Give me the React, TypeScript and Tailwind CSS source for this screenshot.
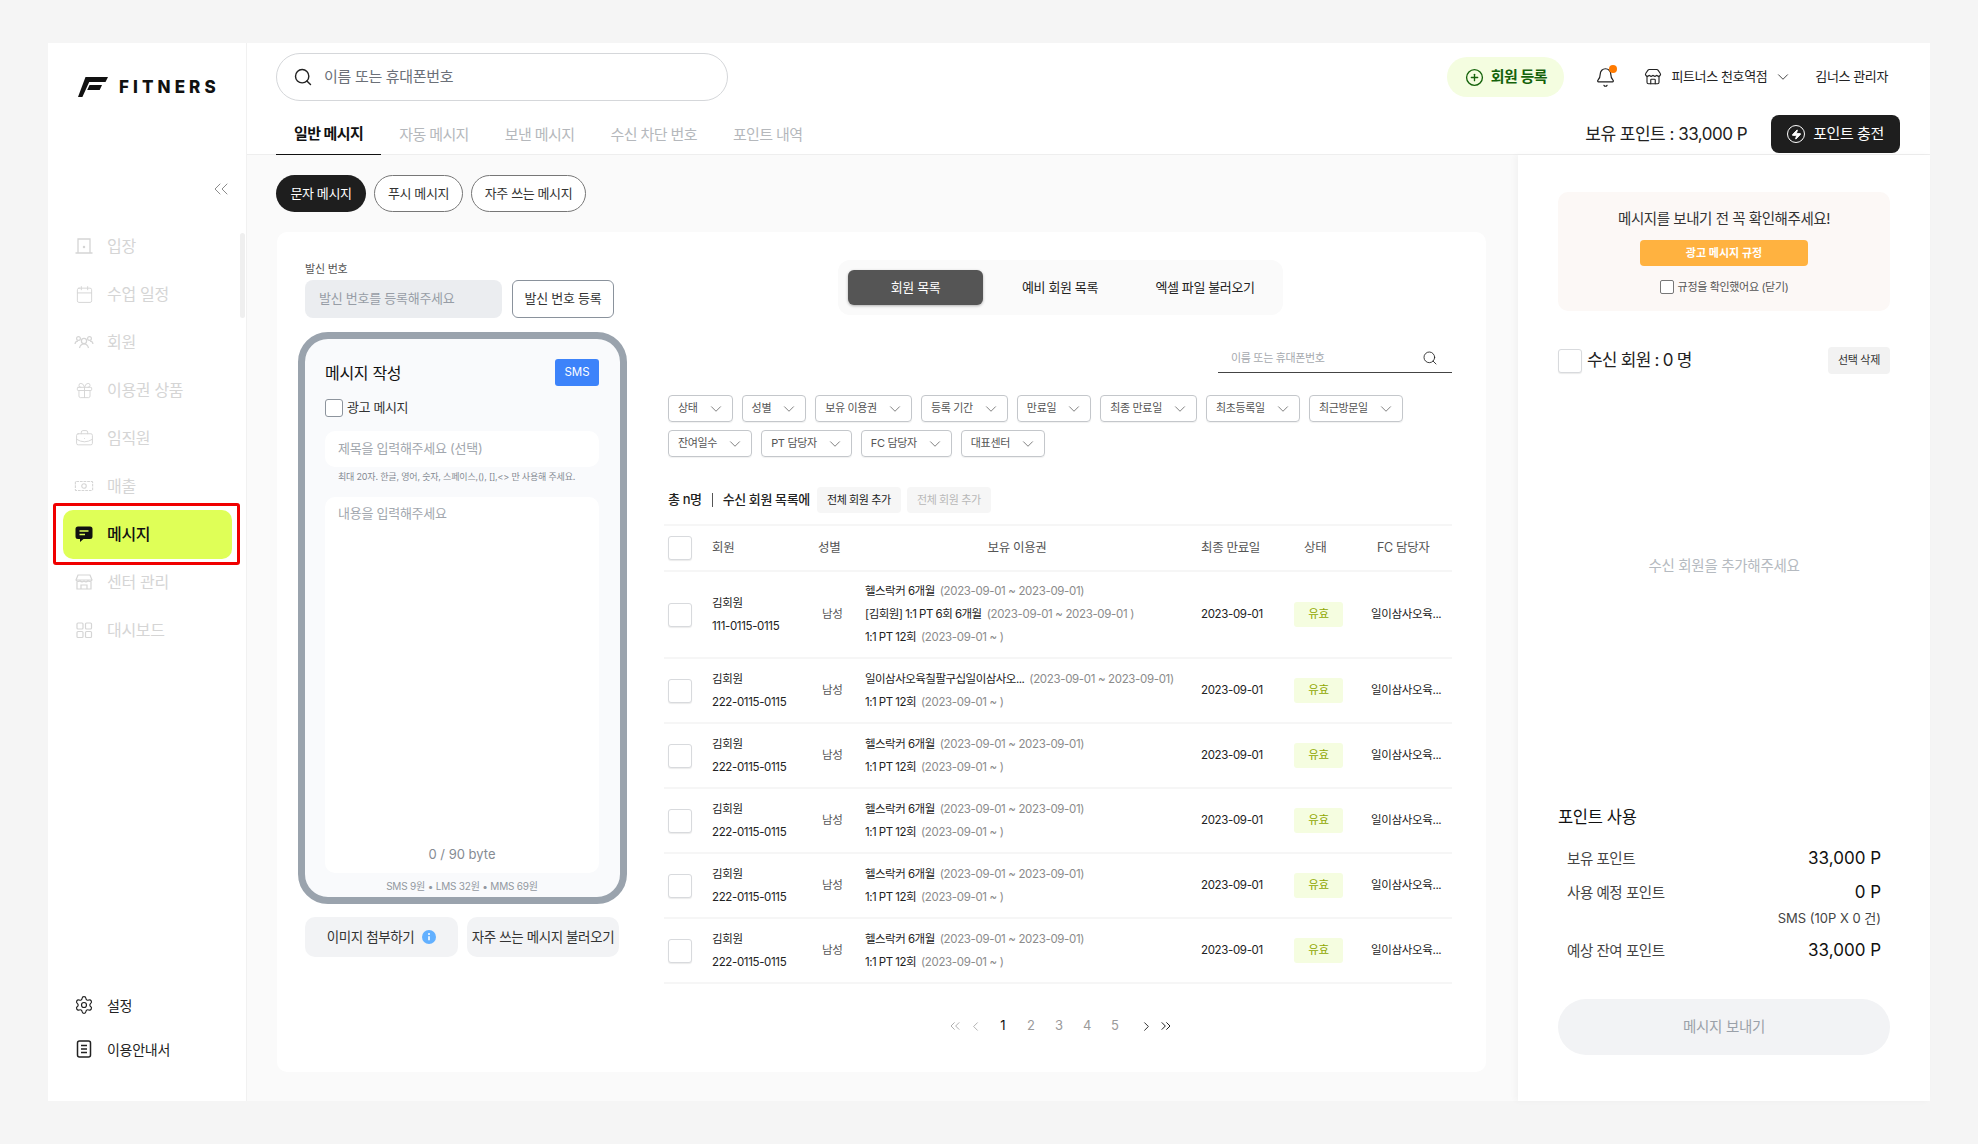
import { Bell, BriefcaseBusiness, Calendar, ChevronDown, ChevronLeft, ChevronRight, ChevronsLeft, ChevronsRight, CirclePlus, Gift, Search, Settings, Store, Zap } from 'lucide-react';

const DoorIcon = () => (
  <svg width="20" height="20" viewBox="0 0 20 20" fill="none" stroke="currentColor" strokeWidth="1.3">
    <path d="M4 17V3h12v14M1.5 17h17" />
    <circle cx="10" cy="11" r="0.6" fill="currentColor" />
  </svg>
);

const PeopleIcon = () => (
  <svg width="20" height="20" viewBox="0 0 20 20" fill="none" stroke="currentColor" strokeWidth="1.2">
    <circle cx="10" cy="9" r="2.6" />
    <path d="M5.5 16c.6-2.6 2.3-4 4.500-4s3.900 1.400 4.500 4" />
    <circle cx="4.500" cy="6.500" r="1.900" />
    <circle cx="15.500" cy="6.500" r="1.900" />
    <path d="M1 12c.3-1.700 1.400-2.800 3-2.800M19 12c-.3-1.700-1.400-2.800-3-2.800" />
  </svg>
);

const MoneyIcon = () => (
  <svg width="22" height="20" viewBox="0 0 22 20" fill="none" stroke="currentColor" strokeWidth="1.2">
    <rect x="1.500" y="5" width="19" height="10" rx="1" strokeDasharray="3 1" />
    <circle cx="11" cy="10" r="2.500" />
  </svg>
);

const MessageIcon = () => (
  <svg width="20" height="20" viewBox="0 0 20 20">
    <path d="M4 2.500h12a2.500 2.500 0 0 1 2.500 2.500v7.500a2.500 2.500 0 0 1-2.500 2.500h-6.500l-3.500 3v-3H4a2.500 2.500 0 0 1-2.500-2.500V5A2.500 2.500 0 0 1 4 2.500z" fill="#111" />
    <path d="M5.500 7h9M5.500 10.500h5.500" stroke="#dfff57" strokeWidth="1.500" />
  </svg>
);

const CenterIcon = () => (
  <svg width="20" height="20" viewBox="0 0 20 20" fill="none" stroke="currentColor" strokeWidth="1.2">
    <path d="M4 3h12l2 5a2.600 2.600 0 0 1-4 .8 3 3 0 0 1-4 .2 3 3 0 0 1-4-.2A2.600 2.600 0 0 1 2 8z" />
    <path d="M3 9.500V17h14V9.500M7 17v-4h6v4M2 8h16" />
  </svg>
);

const GridIcon = () => (
  <svg width="20" height="20" viewBox="0 0 20 20" fill="none" stroke="currentColor" strokeWidth="1.2">
    <rect x="3" y="3" width="6" height="6" rx="1" />
    <rect x="11.500" y="3" width="6" height="6" rx="1" />
    <rect x="3" y="11.500" width="6" height="6" rx="1" />
    <rect x="11.500" y="11.500" width="6" height="6" rx="1" />
  </svg>
);

const GuideIcon = () => (
  <svg width="20" height="20" viewBox="0 0 20 20" fill="none" stroke="#222" strokeWidth="1.500">
    <rect x="3.500" y="2" width="13" height="16" rx="2" />
    <path d="M7 6.500h6M7 10h6M7 13.500h6" />
  </svg>
);

const InfoDot = () => (
  <svg width="14" height="14" viewBox="0 0 14 14">
    <circle cx="7" cy="7" r="7" fill="#62b0ff" />
    <path d="M7 6.200v4" stroke="white" strokeWidth="1.600" />
    <circle cx="7" cy="4" r="1" fill="white" />
  </svg>
);

const Logo = () => (
  <svg width="30" height="20" viewBox="0 0 30 20">
    <path d="M7.500 0H30l-2.500 5H11.200L4.400 20H0z" fill="#111" />
    <path d="M11.500 8H24l-2.300 5H9.200z" fill="#111" />
  </svg>
);

const navItems = [
  { label: '입장', icon: <DoorIcon /> },
  { label: '수업 일정', icon: <Calendar size={19} strokeWidth={1.2} /> },
  { label: '회원', icon: <PeopleIcon /> },
  { label: '이용권 상품', icon: <Gift size={19} strokeWidth={1.2} /> },
  { label: '임직원', icon: <BriefcaseBusiness size={19} strokeWidth={1.2} /> },
  { label: '매출', icon: <MoneyIcon /> },
];

const filters = ['상태', '성별', '보유 이용권', '등록 기간', '만료일', '최종 만료일', '최초등록일', '최근방문일', '잔여일수', 'PT 담당자', 'FC 담당자', '대표센터'];

const tabs = ['자동 메시지', '보낸 메시지', '수신 차단 번호', '포인트 내역'];

const rows = [
  {
    phone: '111-0115-0115',
    tickets: [
      ['헬스락커 6개월', '(2023-09-01 ~ 2023-09-01)'],
      ['[김회원] 1:1 PT 6회 6개월', '(2023-09-01 ~ 2023-09-01 )'],
      ['1:1 PT 12회', '(2023-09-01 ~ )'],
    ],
  },
  {
    phone: '222-0115-0115',
    tickets: [
      ['일이삼사오육칠팔구십일이삼사오...', '(2023-09-01 ~ 2023-09-01)'],
      ['1:1 PT 12회', '(2023-09-01 ~ )'],
    ],
  },
  ...[0, 1, 2, 3].map(() => ({
    phone: '222-0115-0115',
    tickets: [
      ['헬스락커 6개월', '(2023-09-01 ~ 2023-09-01)'],
      ['1:1 PT 12회', '(2023-09-01 ~ )'],
    ],
  })),
];

const Box = () => <div className="w-6 h-6 shrink-0 rounded-[3px] border border-[#d8dadd] bg-white shadow-[0_1px_1px_rgba(0,0,0,0.08)]" />;

const Sidebar = () => (
  <aside className="relative w-[199px] shrink-0 flex flex-col bg-white border-r border-[#f1f1f1] pb-[42px]">
    <div className="flex items-center gap-[11px] pl-[30px] pt-[20px] h-[68px]">
      <Logo />
      <span className="text-[17px] font-extrabold tracking-[0.24em] text-[#111] leading-none">FITNERS</span>
    </div>
    <div className="flex justify-end pr-[13px] mt-[66px] text-[#8c8c8c]">
      <ChevronsLeft size={24} strokeWidth={1} />
    </div>
    <div className="absolute left-[192px] top-[190px] w-[5px] h-[85px] rounded-full bg-[#efefef]" />
    <nav className="flex flex-col mt-[21px]">
      {navItems.map(item => (
        <div key={item.label} className="flex items-center h-12 pl-[26px] text-[#d5d5d5]">
          <span className="w-[20px] flex justify-center">{item.icon}</span>
          <span className="ml-[13px] text-[16px] tracking-[-0.02em]">{item.label}</span>
        </div>
      ))}
      <div className="relative h-12 flex items-center">
        <div className="ml-[15px] w-[169px] h-[49px] rounded-[10px] bg-[#dfff57] flex items-center pl-[11px] text-[#111]">
          <MessageIcon />
          <span className="ml-[13px] text-[16px] font-medium tracking-[-0.02em]">메시지</span>
        </div>
        <div className="absolute left-[5px] top-[-7px] w-[187px] h-[62px] border-[3px] border-[#f00000] rounded-[3px]" />
      </div>
      <div className="flex items-center h-12 pl-[26px] text-[#d5d5d5]">
        <span className="w-[20px] flex justify-center"><CenterIcon /></span>
        <span className="ml-[13px] text-[16px] tracking-[-0.02em]">센터 관리</span>
      </div>
      <div className="flex items-center h-12 pl-[26px] text-[#d5d5d5]">
        <span className="w-[20px] flex justify-center"><GridIcon /></span>
        <span className="ml-[13px] text-[16px] tracking-[-0.02em]">대시보드</span>
      </div>
    </nav>
    <div className="mt-auto flex flex-col gap-[24px] pl-[26px] text-[14px] text-[#222] tracking-[-0.02em]">
      <div className="flex items-center h-5 gap-[13px]"><Settings size={20} strokeWidth={1.4} />설정</div>
      <div className="flex items-center h-5 gap-[13px]"><GuideIcon />이용안내서</div>
    </div>
  </aside>
);

const Header = () => (
  <header className="shrink-0 h-[112px] bg-white border-b border-[#eeeeee]">
    <div className="flex items-center h-[58px] pt-[10px] pl-[29px] pr-[42px]">
      <div className="w-[452px] h-[48px] rounded-full border border-[#d5d7da] flex items-center pl-[16px]">
        <Search size={20} strokeWidth={1.7} className="text-[#222]" />
        <span className="ml-[11px] text-[15px] text-[#6b7078] tracking-[-0.02em]">이름 또는 휴대폰번호</span>
      </div>
      <div className="ml-auto flex items-center">
        <div className="w-[117px] h-[40px] rounded-full bg-[#f4fde0] flex items-center justify-center gap-[7px] text-[#14620a] text-[15px] font-bold tracking-[-0.03em]">
          <CirclePlus size={19} strokeWidth={1.7} />회원 등록
        </div>
        <div className="relative ml-[31px] text-[#222]">
          <Bell size={21} strokeWidth={1.4} />
          <div className="absolute right-[-1px] top-[-2px] w-[8px] h-[8px] rounded-full bg-[#ff7a00]" />
        </div>
        <Store size={18} strokeWidth={1.5} className="ml-[28px] text-[#222]" />
        <span className="ml-[9px] text-[13px] text-[#222] tracking-[-0.03em]">피트너스 천호역점</span>
        <ChevronDown size={18} strokeWidth={1.2} className="ml-[7px] text-[#333]" />
        <span className="ml-[23px] text-[13px] text-[#222] tracking-[-0.03em]">김너스 관리자</span>
      </div>
    </div>
    <div className="flex items-center h-[42px] mt-[12px] pl-[29px] pr-[30px]">
      <div className="flex h-full">
        <div className="px-[18px] pt-[1px] flex items-center border-b-2 border-[#111] text-[15px] font-semibold text-[#111] tracking-[-0.04em] h-[43px]">일반 메시지</div>
        {tabs.map(t => (
          <div key={t} className="px-[18px] pt-[2px] flex items-center text-[15px] text-[#b5b8bc] tracking-[-0.04em]">{t}</div>
        ))}
      </div>
      <div className="ml-auto flex items-center">
        <span className="pt-[2px] text-[17px] text-[#222] tracking-[-0.03em]">보유 포인트 : 33,000 P</span>
        <div className="ml-[24px] w-[129px] h-[38px] rounded-[8px] bg-[#1e1e1e] flex items-center justify-center gap-[8px] text-white text-[15px] tracking-[-0.03em]">
          <span className="w-[18px] h-[18px] rounded-full border-[1.5px] border-white flex items-center justify-center">
            <Zap size={11} fill="white" />
          </span>
          포인트 충전
        </div>
      </div>
    </div>
  </header>
);

const Composer = () => (
  <div className="w-[329px] shrink-0">
    <div className="ml-[7px]">
      <div className="h-[14px] leading-[14px] text-[11px] text-[#555] tracking-[-0.02em]">발신 번호</div>
      <div className="flex mt-[4px] gap-[10px]">
        <div className="w-[197px] h-[38px] rounded-[8px] bg-[#ebedf0] flex items-center pl-[14px] text-[13px] text-[#979da6] tracking-[-0.02em]">발신 번호를 등록해주세요</div>
        <div className="w-[102px] h-[38px] rounded-[6px] border border-[#8a929c] flex items-center justify-center text-[13px] text-[#333] tracking-[-0.02em]">발신 번호 등록</div>
      </div>
    </div>
    <div className="mt-[14px] h-[572px] rounded-[30px] border-[7px] border-[#9aa3ad] bg-[#f9fafc] pt-[20px] pl-[20px] pr-[21px] flex flex-col">
      <div className="flex items-center justify-between h-[27px]">
        <span className="text-[16px] text-[#111] tracking-[-0.02em]">메시지 작성</span>
        <span className="w-[44px] h-[27px] rounded-[3px] bg-[#3d83fa] text-white text-[11.5px] flex items-center justify-center">SMS</span>
      </div>
      <div className="flex items-center h-[18px] mt-[13px] gap-[4px]">
        <div className="w-[18px] h-[18px] rounded-[3px] border border-[#8d949d] bg-white" />
        <span className="text-[13px] text-[#333] tracking-[-0.03em]">광고 메시지</span>
      </div>
      <div className="mt-[14px] h-[36px] rounded-[10px] bg-white flex items-center pl-[13px] text-[13px] text-[#a2a7ae] tracking-[-0.02em]">제목을 입력해주세요 (선택)</div>
      <div className="mt-[3px] h-[14px] pl-[13px] leading-[14px] text-[9px] text-[#858b93] tracking-[-0.02em] whitespace-nowrap">최대 20자. 한글, 영어, 숫자, 스페이스,(), [],&lt;&gt; 만 사용해 주세요.</div>
      <div className="mt-[13px] h-[376px] rounded-[10px] bg-white flex flex-col justify-between pl-[13px] pt-[8px] pb-[11px]">
        <span className="text-[13px] leading-[16px] text-[#a2a7ae] tracking-[-0.02em]">내용을 입력해주세요</span>
        <span className="text-[13px] leading-[16px] text-[#858b93] text-center pr-[13px]">0 / 90 byte</span>
      </div>
      <div className="mt-[6px] text-center text-[10px] leading-[14px] text-[#9298a0] tracking-[-0.02em]">SMS 9원 • LMS 32원 • MMS 69원</div>
    </div>
    <div className="flex gap-[9px] ml-[7px] mt-[13px]">
      <div className="w-[153px] h-[40px] rounded-[10px] bg-[#f2f3f5] flex items-center justify-center gap-[8px] text-[13.5px] text-[#333] tracking-[-0.03em]">
        이미지 첨부하기
        <InfoDot />
      </div>
      <div className="w-[152px] h-[40px] rounded-[10px] bg-[#f2f3f5] flex items-center justify-center text-[13.5px] text-[#333] tracking-[-0.03em] whitespace-nowrap">자주 쓰는 메시지 불러오기</div>
    </div>
  </div>
);

const MemberTable = () => (
  <div className="mt-[11px] text-[11.5px] tracking-[-0.03em] text-[#222]">
    <div className="flex items-center h-[48px] border-y-2 border-[#f6f6f6] pl-[4px] text-[12.5px] text-[#555]">
      <Box />
      <div className="w-[126px] pl-[20px]">회원</div>
      <div className="w-[47px]">성별</div>
      <div className="w-[336px] pr-[32px] text-center">보유 이용권</div>
      <div className="w-[93px]">최종 만료일</div>
      <div className="w-[77px] pl-[10px]">상태</div>
      <div className="w-[81px] pl-[6px]">FC 담당자</div>
    </div>
    {rows.map((row, i) => (
      <div key={i} className="flex items-center border-b-2 border-[#f6f6f6] pl-[4px]" style={{ height: i === 0 ? 87 : 65 }}>
        <Box />
        <div className="w-[126px] pl-[20px] leading-[23px]">
          <div>김회원</div>
          <div>{row.phone}</div>
        </div>
        <div className="w-[47px] pl-[4px] text-[#555]">남성</div>
        <div className="w-[336px] leading-[23px] whitespace-nowrap">
          {row.tickets.map((t, j) => (
            <div key={j}>
              <span className="tracking-[-0.045em]">{t[0]}</span>
              <span className="ml-[5px] text-[#8b8b8b]">{t[1]}</span>
            </div>
          ))}
        </div>
        <div className="w-[93px]">2023-09-01</div>
        <div className="w-[77px]">
          <div className="w-[49px] h-[25px] rounded-[3px] bg-[#f5fde0] text-[#90a800] flex items-center justify-center">유효</div>
        </div>
        <div className="w-[81px] whitespace-nowrap">일이삼사오육...</div>
      </div>
    ))}
  </div>
);

const Pagination = () => (
  <div className="relative mt-[32px] h-[20px] flex items-center justify-center pl-[5px] text-[13px] text-[#9a9a9a]">
    <ChevronsLeft size={16} strokeWidth={1.2} />
    <ChevronLeft size={15} strokeWidth={1.2} className="ml-[5px]" />
    <span className="ml-[16px] w-[8px] text-center text-[#111]">1</span>
    {[2, 3, 4, 5].map(n => (
      <span key={n} className="ml-[20px] w-[8px] text-center">{n}</span>
    ))}
    <ChevronRight size={15} strokeWidth={1.5} className="ml-[20px] text-[#222]" />
    <ChevronsRight size={16} strokeWidth={1.5} className="ml-[4px] text-[#222]" />
  </div>
);

const MemberPanel = () => (
  <div className="w-[788px] ml-[37px] shrink-0">
    <div className="ml-[174px] w-[445px] h-[55px] rounded-[12px] bg-[#fafafa] flex items-center pl-[10px] text-[13px] text-[#222] tracking-[-0.03em]">
      <div className="w-[135px] h-[35px] rounded-[6px] bg-[#555555] text-white flex items-center justify-center shadow-[0_1px_3px_rgba(0,0,0,0.3)]">회원 목록</div>
      <div className="w-[154px] text-center">예비 회원 목록</div>
      <div className="w-[136px] text-center">엑셀 파일 불러오기</div>
    </div>
    <div className="mt-[35px] ml-auto w-[234px] h-[23px] border-b-[1.5px] border-[#444] flex items-start justify-between pl-[13px] pr-[14px] text-[11px] text-[#a5a9ae] tracking-[-0.03em]">
      이름 또는 휴대폰번호
      <Search size={16} strokeWidth={1.3} className="text-[#222]" />
    </div>
    <div className="mt-[22px] flex flex-wrap gap-x-[9px] gap-y-[8px] pl-[4px]">
      {filters.map(f => (
        <div key={f} className="h-[27px] pl-[9px] pr-[7px] rounded-[4px] border border-[#c4c7cb] flex items-center gap-[9px] text-[11px] text-[#555] tracking-[-0.03em] shadow-[0_1px_1px_rgba(0,0,0,0.06)]">
          {f}
          <ChevronDown size={18} strokeWidth={1.1} className="text-[#666]" />
        </div>
      ))}
    </div>
    <div className="mt-[30px] h-[26px] flex items-center pl-[4px] text-[13px] text-[#222] tracking-[-0.03em]">
      <span className="font-medium">총 n명</span>
      <span className="mx-[10px] w-px h-[14px] bg-[#555]" />
      <span className="font-medium">수신 회원 목록에</span>
      <span className="ml-[7px] w-[84px] h-[26px] rounded-[4px] bg-[#f6f6f6] flex items-center justify-center text-[11px]">전체 회원 추가</span>
      <span className="ml-[6px] w-[84px] h-[26px] rounded-[4px] bg-[#f6f6f6] flex items-center justify-center text-[11px] text-[#b8b8b8]">전체 회원 추가</span>
    </div>
    <MemberTable />
    <Pagination />
  </div>
);

const PointRow = ({ label, value }: { label: string; value: string }) => (
  <div className="flex items-center justify-between pl-[9px] pr-[9px] h-[22px]">
    <span className="text-[14.5px] text-[#444] tracking-[-0.03em]">{label}</span>
    <span className="text-[17px] text-[#111]">{value}</span>
  </div>
);

const RightPanel = () => (
  <aside className="w-[412px] shrink-0 bg-white shadow-[-3px_0_6px_rgba(0,0,0,0.03)] pt-[37px] pl-[40px] pr-[40px] pb-[46px] flex flex-col">
    <div className="h-[119px] rounded-[10px] bg-[#fcf8f6] flex flex-col items-center pt-[17px]">
      <div className="text-[14.5px] leading-[20px] text-[#333] tracking-[-0.03em]">메시지를 보내기 전 꼭 확인해주세요!</div>
      <div className="mt-[11px] w-[168px] h-[26px] rounded-[4px] bg-[#ffb240] text-white text-[11px] font-semibold flex items-center justify-center">광고 메시지 규정</div>
      <div className="mt-[13px] flex items-center gap-[4px] text-[11px] text-[#555] tracking-[-0.03em]">
        <div className="w-[14px] h-[14px] rounded-[2px] border border-[#777] bg-white" />
        규정을 확인했어요 (닫기)
      </div>
    </div>
    <div className="mt-[36px] flex items-center h-[27px]">
      <Box />
      <span className="ml-[5px] text-[17px] text-[#222] tracking-[-0.045em]">수신 회원 : 0 명</span>
      <span className="ml-auto w-[62px] h-[27px] rounded-[4px] bg-[#f2f2f2] flex items-center justify-center text-[11px] text-[#333] tracking-[-0.03em]">선택 삭제</span>
    </div>
    <div className="mt-[181px] text-center text-[14.5px] text-[#b5bac0] tracking-[-0.02em]">수신 회원을 추가해주세요</div>
    <div className="mt-auto">
      <div className="text-[16.5px] leading-[20px] text-[#111] tracking-[-0.02em]">포인트 사용</div>
      <div className="mt-[21px]"><PointRow label="보유 포인트" value="33,000 P" /></div>
      <div className="mt-[12px]"><PointRow label="사용 예정 포인트" value="0 P" /></div>
      <div className="mt-[6px] pr-[9px] text-right text-[13px] leading-[16px] text-[#444]">SMS (10P X 0 건)</div>
      <div className="mt-[14px]"><PointRow label="예상 잔여 포인트" value="33,000 P" /></div>
      <div className="mt-[37px] h-[56px] rounded-full bg-[#f2f3f5] flex items-center justify-center text-[14.5px] text-[#9aa1a9] tracking-[-0.02em]">메시지 보내기</div>
    </div>
  </aside>
);

export default function App() {
  return (
    <div className="h-[1144px] bg-[#f5f5f5] px-[48px] py-[43px] font-['Inter','Noto_Sans_CJK_KR',sans-serif]">
      <div className="h-full flex bg-white">
        <Sidebar />
        <main className="flex-1 flex flex-col min-w-0">
          <Header />
          <div className="flex-1 flex min-h-0">
            <section className="flex-1 bg-[#fafafa] pt-[20px] pl-[29px] pr-[32px] min-w-0">
              <div className="flex gap-[8px] h-[37px] text-[13px] tracking-[-0.03em]">
                <div className="w-[90px] rounded-full bg-[#1e1e1e] text-white flex items-center justify-center">문자 메시지</div>
                <div className="w-[89px] rounded-full border border-[#777] bg-white text-[#333] flex items-center justify-center">푸시 메시지</div>
                <div className="w-[115px] rounded-full border border-[#777] bg-white text-[#333] flex items-center justify-center">자주 쓰는 메시지</div>
              </div>
              <div className="mt-[20px] ml-[1px] h-[840px] rounded-[10px] bg-white flex pt-[28px] pl-[21px]">
                <div className="pt-[2px]"><Composer /></div>
                <MemberPanel />
              </div>
            </section>
            <RightPanel />
          </div>
        </main>
      </div>
    </div>
  );
}
